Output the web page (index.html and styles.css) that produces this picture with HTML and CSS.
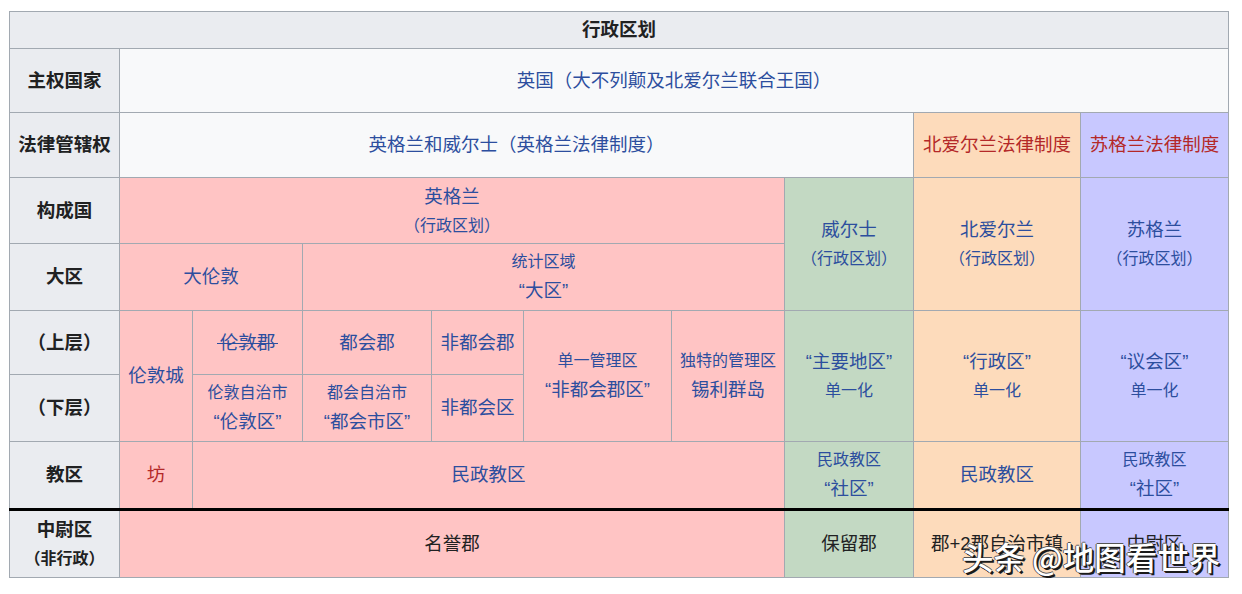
FILE: index.html
```html
<!DOCTYPE html>
<html lang="zh-CN">
<head>
<meta charset="utf-8">
<title>行政区划</title>
<link rel="stylesheet" href="styles.css">
</head>
<body>
<div class="page">
  <div class="grid">
    <div class="cell head x1 wall y1">行政区划</div>

    <div class="cell head x1 y2">主权国家</div>
    <div class="cell plain x2 w9 y2"><span class="link">英国（大不列颠及北爱尔兰联合王国）</span></div>

    <div class="cell head x1 y3">法律管辖权</div>
    <div class="cell plain x2 w7 y3"><span class="link">英格兰和威尔士（英格兰法律制度）</span></div>
    <div class="cell ni x9 y3"><span class="red">北爱尔兰法律制度</span></div>
    <div class="cell sc x10 y3"><span class="red">苏格兰法律制度</span></div>

    <div class="cell head x1 y4">构成国</div>
    <div class="cell en x2 w6 y4"><span class="link">英格兰</span><span class="link small">（行政区划）</span></div>
    <div class="cell wa x8 y4 h2"><span class="link">威尔士</span><span class="link small">（行政区划）</span></div>
    <div class="cell ni x9 y4 h2"><span class="link">北爱尔兰</span><span class="link small">（行政区划）</span></div>
    <div class="cell sc x10 y4 h2"><span class="link">苏格兰</span><span class="link small">（行政区划）</span></div>

    <div class="cell head x1 y5">大区</div>
    <div class="cell en x2 w2 y5"><span class="link">大伦敦</span></div>
    <div class="cell en x4 w4 y5"><span class="link small">统计区域</span><span class="link">“大区”</span></div>

    <div class="cell head x1 y6">（上层）</div>
    <div class="cell en x2 y6 h2"><span class="link">伦敦城</span></div>
    <div class="cell en x3 y6"><span class="link strike">伦敦郡</span></div>
    <div class="cell en x4 y6"><span class="link">都会郡</span></div>
    <div class="cell en x5 y6"><span class="link">非都会郡</span></div>
    <div class="cell en x6 y6 h2"><span class="link small">单一管理区</span><span class="link">“非都会郡区”</span></div>
    <div class="cell en x7 y6 h2"><span class="link small">独特的管理区</span><span class="link">锡利群岛</span></div>
    <div class="cell wa x8 y6 h2"><span class="link">“主要地区”</span><span class="link small">单一化</span></div>
    <div class="cell ni x9 y6 h2"><span class="link">“行政区”</span><span class="link small">单一化</span></div>
    <div class="cell sc x10 y6 h2"><span class="link">“议会区”</span><span class="link small">单一化</span></div>

    <div class="cell head x1 y7">（下层）</div>
    <div class="cell en x3 y7"><span class="link small">伦敦自治市</span><span class="link">“伦敦区”</span></div>
    <div class="cell en x4 y7"><span class="link small">都会自治市</span><span class="link">“都会市区”</span></div>
    <div class="cell en x5 y7"><span class="link">非都会区</span></div>

    <div class="cell head x1 y8">教区</div>
    <div class="cell en x2 y8"><span class="red">坊</span></div>
    <div class="cell en x3 w5 y8"><span class="link">民政教区</span></div>
    <div class="cell wa x8 y8"><span class="link small">民政教区</span><span class="link">“社区”</span></div>
    <div class="cell ni x9 y8"><span class="link">民政教区</span></div>
    <div class="cell sc x10 y8"><span class="link small">民政教区</span><span class="link">“社区”</span></div>

    <div class="sep"></div>

    <div class="cell head x1 y10"><span>中尉区</span><span class="small">（非行政）</span></div>
    <div class="cell en x2 w6 y10"><span class="text">名誉郡</span></div>
    <div class="cell wa x8 y10"><span class="text">保留郡</span></div>
    <div class="cell ni x9 y10"><span class="text">郡+2郡自治市镇</span></div>
    <div class="cell sc x10 y10"><span class="text">中尉区</span></div>
  </div>
  <div class="watermark">头条 @地图看世界</div>
</div>
</body>
</html>
```

FILE: styles.css
```css
html, body {
  margin: 0;
  padding: 0;
  background: #ffffff;
}

body {
  font-family: "Liberation Sans", "Noto Sans CJK SC", sans-serif;
  color: #202122;
}

.page {
  position: relative;
  width: 1242px;
  height: 594px;
  padding: 11px 0 0 9px;
  box-sizing: border-box;
}

.grid {
  display: grid;
  width: 1220px;
  box-sizing: border-box;
  border: 1px solid #a2a9b1;
  background: #a2a9b1;
  gap: 1px;
  grid-template-columns: 109px 72px 109px 128px 91px 147px 112px 128px 166px 147px;
  grid-template-rows: 36px 63px 64px 65px 66px 63px 66px 66px 1px 66px;
}

.cell {
  display: flex;
  flex-direction: column;
  align-items: center;
  justify-content: center;
  text-align: center;
  font-size: 18.5px;
  line-height: 30px;
  white-space: nowrap;
  overflow: hidden;
}

.head {
  background: #eaecf0;
  font-weight: bold;
  color: #202122;
}

.plain { background: #f8f9fa; }
.en { background: #ffc4c4; }
.wa { background: #c3d9c3; }
.ni { background: #fddbbb; }
.sc { background: #c8c8ff; }

.link { color: #2c4e9e; }
.red { color: #b42828; }
.text { color: #202122; }

.small {
  font-size: 16px;
  line-height: 28px;
}

.strike {
  padding: 0 3px;
  background-image: linear-gradient(#2c4e9e, #2c4e9e);
  background-size: 100% 1px;
  background-position: 0 54%;
  background-repeat: no-repeat;
}

.sep {
  grid-column: 1 / -1;
  grid-row: 9;
  background: #000000;
  margin: -1px -1px;
}

/* grid placement helpers */
.x1 { grid-column-start: 1; }
.x2 { grid-column-start: 2; }
.x3 { grid-column-start: 3; }
.x4 { grid-column-start: 4; }
.x5 { grid-column-start: 5; }
.x6 { grid-column-start: 6; }
.x7 { grid-column-start: 7; }
.x8 { grid-column-start: 8; }
.x9 { grid-column-start: 9; }
.x10 { grid-column-start: 10; }

.w2 { grid-column-end: span 2; }
.w4 { grid-column-end: span 4; }
.w5 { grid-column-end: span 5; }
.w6 { grid-column-end: span 6; }
.w7 { grid-column-end: span 7; }
.w9 { grid-column-end: span 9; }
.wall { grid-column-end: -1; }

.y1 { grid-row-start: 1; }
.y2 { grid-row-start: 2; }
.y3 { grid-row-start: 3; }
.y4 { grid-row-start: 4; }
.y5 { grid-row-start: 5; }
.y6 { grid-row-start: 6; }
.y7 { grid-row-start: 7; }
.y8 { grid-row-start: 8; }
.y10 { grid-row-start: 10; }

.h2 { grid-row-end: span 2; }

.watermark {
  position: absolute;
  left: 962px;
  top: 535px;
  font-family: "Noto Sans CJK SC", sans-serif;
  font-size: 31.5px;
  line-height: 42px;
  font-weight: 500;
  color: #ffffff;
  white-space: nowrap;
  text-shadow: 2px 2px 0 #1a1a1a, 1px 1px 0 #1a1a1a, -1px 0 0 #555, 0 -1px 0 #555;
}
```
